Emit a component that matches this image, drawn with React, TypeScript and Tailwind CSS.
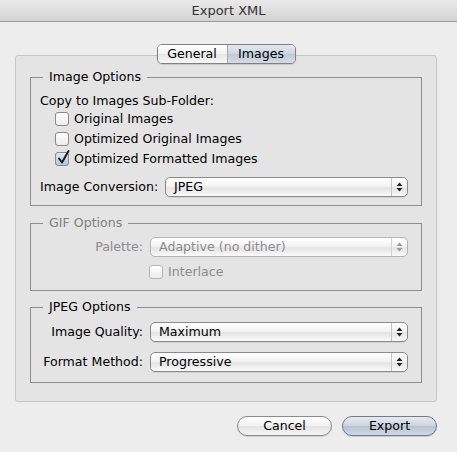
import type { ReactNode } from 'react'

const font = { fontFamily: '"DejaVu Sans", "Liberation Sans", sans-serif' }

function Arrows({ disabled }: { disabled?: boolean }) {
  const c = disabled ? '#9a9a9a' : '#222'
  return (
    <svg width="7" height="10" viewBox="0 0 7 10">
      <path d="M3.5 0.5 L6.5 4 L0.5 4 Z" fill={c} />
      <path d="M3.5 9.5 L6.5 6 L0.5 6 Z" fill={c} />
    </svg>
  )
}

function Select({ value, disabled }: { value: string; disabled?: boolean }) {
  return (
    <div
      className={`flex h-[20px] flex-1 items-stretch rounded-[5px] border ${
        disabled
          ? 'border-[#b4b4b4] text-[#8c8c8c]'
          : 'border-[#8a8a8a] text-black shadow-[0_1px_0_rgba(0,0,0,0.08)]'
      } bg-[linear-gradient(#ffffff,#f3f3f3_45%,#e4e4e4_55%,#fafafa)]`}
    >
      <div className="flex flex-1 items-center pl-[8px] leading-none">{value}</div>
      <div
        className={`flex w-[16px] items-center justify-center border-l ${
          disabled ? 'border-[#d2d2d2]' : 'border-[#c4c4c4]'
        }`}
      >
        <Arrows disabled={disabled} />
      </div>
    </div>
  )
}

function Checkbox({ label, checked, disabled }: { label: string; checked?: boolean; disabled?: boolean }) {
  return (
    <div className={`flex h-[20px] items-center gap-[5px] ${disabled ? 'text-[#8c8c8c]' : 'text-black'}`}>
      <div
        className={`relative h-[14px] w-[14px] rounded-[3px] border ${
          disabled ? 'border-[#b4b4b4]' : 'border-[#8a8a8a]'
        } ${
          checked
            ? 'bg-[linear-gradient(#e2e8f0,#b9c4d3)]'
            : 'bg-[linear-gradient(#ffffff,#ececec)]'
        }`}
      >
        {checked && (
          <svg className="absolute -top-[3px] left-[1px]" width="13" height="15" viewBox="0 0 13 15">
            <path d="M2 8.5 L5 12.5 L11.5 1" fill="none" stroke="#1c1c1c" strokeWidth="2" strokeLinecap="round" strokeLinejoin="round" />
          </svg>
        )}
      </div>
      <span className="leading-none">{label}</span>
    </div>
  )
}

function Group({ title, disabled, children, className }: { title: string; disabled?: boolean; children: ReactNode; className?: string }) {
  return (
    <fieldset className={`border border-[#8e8e8e] ${className ?? ''}`}>
      <legend className={`ml-[12px] px-[6px] leading-[16px] ${disabled ? 'text-[#808080]' : 'text-black'}`}>
        {title}
      </legend>
      {children}
    </fieldset>
  )
}

function Row({ label, value, disabled }: { label: string; value: string; disabled?: boolean }) {
  return (
    <div className="flex h-[20px] items-center">
      <div className={`w-[112px] text-right ${disabled ? 'text-[#8c8c8c]' : 'text-black'}`}>{label}</div>
      <div className="ml-[7px] flex flex-1">
        <Select value={value} disabled={disabled} />
      </div>
    </div>
  )
}

export default function App() {
  return (
    <div className="flex h-[452px] w-[457px] flex-col bg-[#ededed] text-[12.6px]" style={font}>
      <div className="flex h-[22px] items-center justify-center border-b border-[#9c9c9c] bg-[linear-gradient(#eaeaea,#d3d3d3)] text-[13px] text-[#333]">
        Export XML
      </div>

      <div className="mt-[22px] flex flex-col pl-[15px] pr-[20px]">
        <div className="relative z-10 flex justify-center">
          <div className="flex h-[20px] overflow-hidden rounded-[5px] border border-[#808080] shadow-[0_1px_1px_rgba(0,0,0,0.12)]">
            <div className="flex w-[70px] items-center justify-center border-r border-[#a8a8a8] bg-[linear-gradient(#ffffff,#f2f2f2_50%,#e6e6e6_52%,#f7f7f7)]">
              General
            </div>
            <div className="flex w-[67px] items-center justify-center bg-[linear-gradient(#e3e8ef,#ccd5e0_50%,#bfcad7_52%,#d3dbe5)]">
              Images
            </div>
          </div>
        </div>

        <div className="-mt-[9px] flex h-[347px] flex-col rounded-[3px] border border-[#c6c6c6] bg-[#e4e4e4] px-[14px] pt-[13px]">
          <Group title="Image Options" className="pb-[8px]">
            <div className="flex flex-col pl-[9px] pr-[13px] pt-[8px]">
              <div className="flex h-[16px] items-center">Copy to Images Sub-Folder:</div>
              <div className="flex flex-col pl-[15px]">
                <Checkbox label="Original Images" />
                <Checkbox label="Optimized Original Images" />
                <Checkbox label="Optimized Formatted Images" checked />
              </div>
              <div className="mt-[8px] flex h-[20px] items-center">
                <span className="w-[125px]">Image Conversion:</span>
                <Select value="JPEG" />
              </div>
            </div>
          </Group>

          <Group title="GIF Options" disabled className="mt-[9px] pb-[8px]">
            <div className="flex flex-col pr-[13px] pt-[6px]">
              <Row label="Palette:" value="Adaptive (no dither)" disabled />
              <div className="ml-[118px] mt-[5px]">
                <Checkbox label="Interlace" disabled />
              </div>
            </div>
          </Group>

          <Group title="JPEG Options" className="mt-[8px] pb-[10px]">
            <div className="flex flex-col gap-[10px] pr-[13px] pt-[7px]">
              <Row label="Image Quality:" value="Maximum" />
              <Row label="Format Method:" value="Progressive" />
            </div>
          </Group>
        </div>

        <div className="mt-[14px] flex justify-end gap-[10px]">
          <button className="h-[20px] w-[95px] rounded-full border border-[#8a8a8a] bg-[linear-gradient(#ffffff,#f1f1f1_50%,#e2e2e2_52%,#f6f6f6)] leading-none shadow-[0_1px_1px_rgba(0,0,0,0.12)]">
            Cancel
          </button>
          <button className="h-[20px] w-[95px] rounded-full border border-[#6f7b8c] bg-[linear-gradient(#e6eaf0,#ccd4df_50%,#b9c3d0_52%,#d2d9e2)] leading-none shadow-[0_1px_1px_rgba(0,0,0,0.15)]">
            Export
          </button>
        </div>
      </div>
    </div>
  )
}
